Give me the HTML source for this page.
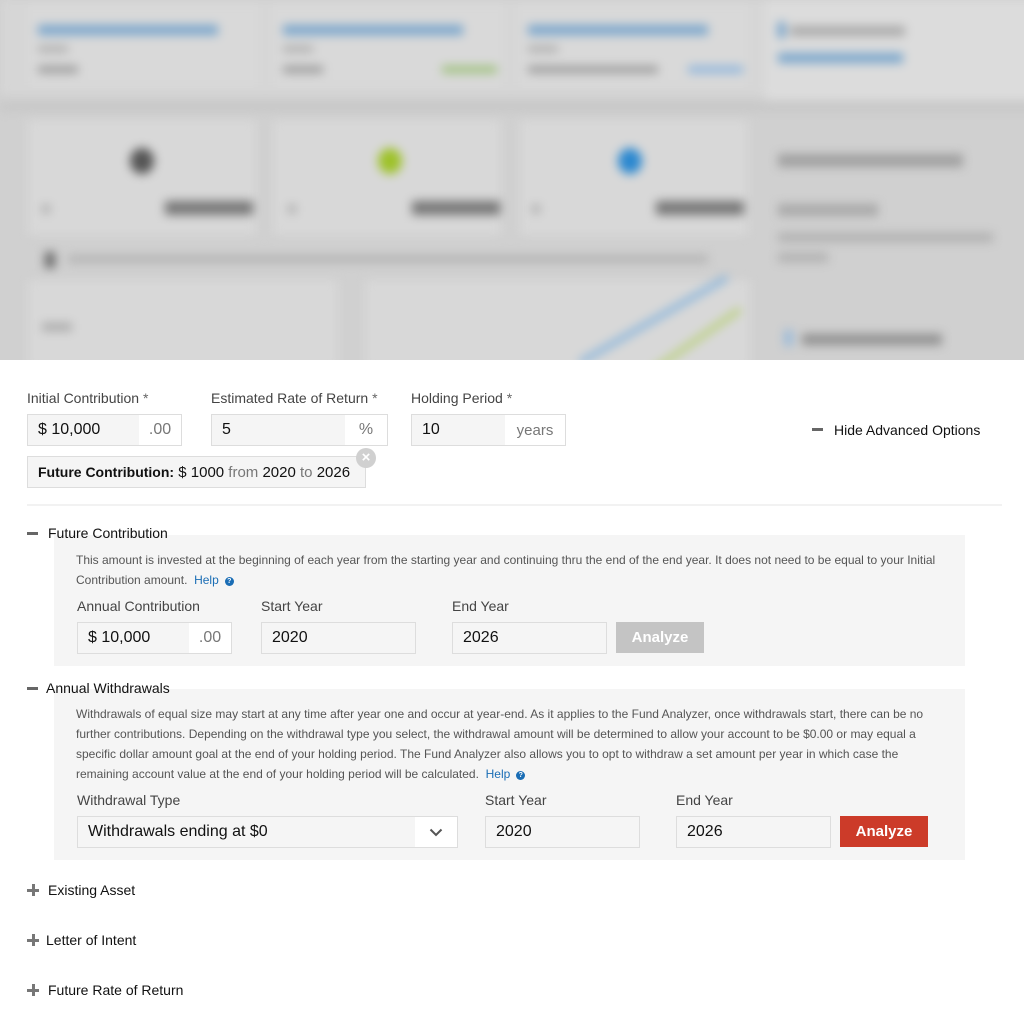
<!DOCTYPE html>
<html><head><style>
*{margin:0;padding:0;box-sizing:border-box}
body{width:1024px;height:1024px;overflow:hidden;background:#fff;font-family:"Liberation Sans",Arial,sans-serif;position:relative;color:#222}
.a{position:absolute}
#top{position:absolute;left:0;top:0;width:1024px;height:360px;overflow:hidden;background:#d0d0d0}
#blur{position:absolute;left:-10px;top:-10px;width:1044px;height:380px;filter:blur(5px)}
.lbl{font-size:14px;color:#444;position:absolute}
.inp{position:absolute;border:1px solid #ddd;background:#f5f5f5;font-size:16px;color:#111;padding-left:10px;display:flex;align-items:center}
.suf{position:absolute;right:0;top:0;bottom:0;background:#fff;color:#777;display:flex;align-items:center;justify-content:center}
.sec{position:absolute;font-size:14px;color:#111}
.minus{position:absolute;width:11px;height:3px;background:#666}
.plus{position:absolute;width:12px;height:12px}
.plus:before{content:"";position:absolute;left:0;top:5px;width:12px;height:3px;background:#777}
.plus:after{content:"";position:absolute;left:4.5px;top:0;width:3px;height:12px;background:#777}
.txt{position:absolute;font-size:12px;color:#555;line-height:20px}
.help{color:#1a6db5}
.q{display:inline-block;width:9px;height:9px;border-radius:50%;background:#1a6db5;color:#fff;font-size:7px;font-weight:bold;line-height:9px;text-align:center;vertical-align:1px;margin-left:6px}
</style></head><body>
<div id="top"><div id="blur">
 <div class="a" style="left:10px;top:10px;width:1044px;height:95px;background:#d6d6d6"></div>
 <div class="a" style="left:38px;top:15px;width:230px;height:80px;background:#d9d9d9"></div>
 <div class="a" style="left:283px;top:15px;width:230px;height:80px;background:#d9d9d9"></div>
 <div class="a" style="left:528px;top:15px;width:230px;height:80px;background:#d9d9d9"></div>
 <div class="a" style="left:775px;top:10px;width:270px;height:100px;background:#dcdcdc"></div>
 <div class="a" style="left:48px;top:35px;width:180px;height:10px;background:#7aa6cc"></div>
 <div class="a" style="left:293px;top:35px;width:180px;height:10px;background:#7aa6cc"></div>
 <div class="a" style="left:538px;top:35px;width:180px;height:10px;background:#7aa6cc"></div>
 <div class="a" style="left:48px;top:56px;width:30px;height:6px;background:#aaa"></div>
 <div class="a" style="left:48px;top:76px;width:40px;height:7px;background:#999"></div>
 <div class="a" style="left:293px;top:56px;width:30px;height:6px;background:#aaa"></div>
 <div class="a" style="left:293px;top:76px;width:40px;height:7px;background:#999"></div>
 <div class="a" style="left:538px;top:56px;width:30px;height:6px;background:#aaa"></div>
 <div class="a" style="left:538px;top:76px;width:130px;height:7px;background:#999"></div>
 <div class="a" style="left:452px;top:76px;width:55px;height:7px;background:#9cc07a"></div>
 <div class="a" style="left:698px;top:76px;width:55px;height:7px;background:#8cb4dc"></div>
 <div class="a" style="left:788px;top:32px;width:7px;height:16px;background:#6a9cc8"></div>
 <div class="a" style="left:800px;top:36px;width:115px;height:10px;background:#aaa"></div>
 <div class="a" style="left:788px;top:63px;width:125px;height:10px;background:#7aa6cc"></div>
 <div class="a" style="left:10px;top:113px;width:1044px;height:8px;background:#c6c6c6"></div>
 <div class="a" style="left:38px;top:130px;width:228px;height:115px;background:#d8d8d8"></div>
 <div class="a" style="left:283px;top:130px;width:228px;height:115px;background:#d8d8d8"></div>
 <div class="a" style="left:530px;top:130px;width:228px;height:115px;background:#d8d8d8"></div>
 <div class="a" style="left:140px;top:158px;width:24px;height:26px;border-radius:50%;background:#555"></div>
 <div class="a" style="left:388px;top:158px;width:24px;height:26px;border-radius:50%;background:#9ec22a"></div>
 <div class="a" style="left:628px;top:158px;width:24px;height:26px;border-radius:50%;background:#2b88d0"></div>
 <div class="a" style="left:175px;top:211px;width:88px;height:14px;background:#777"></div>
 <div class="a" style="left:422px;top:211px;width:88px;height:14px;background:#777"></div>
 <div class="a" style="left:666px;top:211px;width:88px;height:14px;background:#777"></div>
 <div class="a" style="left:52px;top:215px;width:8px;height:8px;background:#aaa"></div>
 <div class="a" style="left:298px;top:215px;width:8px;height:8px;background:#aaa"></div>
 <div class="a" style="left:542px;top:215px;width:8px;height:8px;background:#aaa"></div>
 <div class="a" style="left:788px;top:164px;width:185px;height:13px;background:#a0a0a0"></div>
 <div class="a" style="left:788px;top:214px;width:100px;height:12px;background:#a8a8a8"></div>
 <div class="a" style="left:788px;top:243px;width:215px;height:9px;background:#b0b0b0"></div>
 <div class="a" style="left:788px;top:263px;width:50px;height:9px;background:#b0b0b0"></div>
 <div class="a" style="left:55px;top:262px;width:10px;height:16px;background:#666"></div>
 <div class="a" style="left:78px;top:265px;width:640px;height:8px;background:#b4b4b4"></div>
 <div class="a" style="left:38px;top:290px;width:310px;height:90px;background:#d8d8d8"></div>
 <div class="a" style="left:375px;top:290px;width:385px;height:90px;background:#d8d8d8"></div>
 <div class="a" style="left:52px;top:333px;width:30px;height:8px;background:#aaa"></div>
 <div class="a" style="left:590px;top:370px;width:170px;height:5px;background:#7aaedc;transform:rotate(-30deg);transform-origin:left"></div>
 <div class="a" style="left:660px;top:380px;width:110px;height:5px;background:#b6d070;transform:rotate(-35deg);transform-origin:left"></div>
 <div class="a" style="left:795px;top:340px;width:7px;height:16px;background:#8cb4dc"></div>
 <div class="a" style="left:812px;top:344px;width:140px;height:11px;background:#909090"></div>
</div></div>

<div class="lbl" style="left:27px;top:390px">Initial Contribution <span style="color:#666">*</span></div>
<div class="lbl" style="left:211px;top:390px">Estimated Rate of Return <span style="color:#666">*</span></div>
<div class="lbl" style="left:411px;top:390px">Holding Period <span style="color:#666">*</span></div>
<div class="inp" style="left:27px;top:414px;width:155px;height:32px">$ 10,000<div class="suf" style="width:42px;font-size:16px">.00</div></div>
<div class="inp" style="left:211px;top:414px;width:177px;height:32px">5<div class="suf" style="width:42px;font-size:16px">%</div></div>
<div class="inp" style="left:411px;top:414px;width:155px;height:32px">10<div class="suf" style="width:60px;font-size:15px">years</div></div>
<div class="minus" style="left:812px;top:428px"></div>
<div class="sec" style="left:834px;top:422px">Hide Advanced Options</div>
<div class="inp" style="left:27px;top:456px;width:339px;height:32px;font-size:15px;padding-left:10px"><b style="font-size:14px">Future Contribution:</b>&nbsp;$ 1000 <span style="color:#777">&nbsp;from&nbsp;</span>2020<span style="color:#777">&nbsp;to&nbsp;</span>2026</div>
<div class="a" style="left:356px;top:448px;width:20px;height:20px;border-radius:50%;background:#d0d0d0;color:#fff;font-size:15px;font-weight:bold;text-align:center;line-height:20px">×</div>
<div class="a" style="left:27px;top:504px;width:975px;height:2px;background:#f2f2f2"></div>

<div class="minus" style="left:27px;top:532px"></div>
<div class="a" style="left:54px;top:535px;width:911px;height:131px;background:#f5f5f5"></div>
<div class="sec" style="left:48px;top:525px">Future Contribution</div>
<div class="txt" style="left:76px;top:550px;width:880px">This amount is invested at the beginning of each year from the starting year and continuing thru the end of the end year. It does not need to be equal to your Initial Contribution amount. <span class="help">&nbsp;Help</span><span class="q">?</span></div>
<div class="lbl" style="left:77px;top:598px">Annual Contribution</div>
<div class="lbl" style="left:261px;top:598px">Start Year</div>
<div class="lbl" style="left:452px;top:598px">End Year</div>
<div class="inp" style="left:77px;top:622px;width:155px;height:32px">$ 10,000<div class="suf" style="width:42px;font-size:16px">.00</div></div>
<div class="inp" style="left:261px;top:622px;width:155px;height:32px">2020</div>
<div class="inp" style="left:452px;top:622px;width:155px;height:32px">2026</div>
<div class="a" style="left:616px;top:622px;width:88px;height:31px;background:#c4c4c4;color:#fff;font-weight:bold;font-size:15px;text-align:center;line-height:31px">Analyze</div>

<div class="minus" style="left:27px;top:687px"></div>
<div class="a" style="left:54px;top:689px;width:911px;height:171px;background:#f5f5f5"></div>
<div class="sec" style="left:46px;top:680px">Annual Withdrawals</div>
<div class="txt" style="left:76px;top:704px;width:862px">Withdrawals of equal size may start at any time after year one and occur at year-end. As it applies to the Fund Analyzer, once withdrawals start, there can be no further contributions. Depending on the withdrawal type you select, the withdrawal amount will be determined to allow your account to be $0.00 or may equal a specific dollar amount goal at the end of your holding period. The Fund Analyzer also allows you to opt to withdraw a set amount per year in which case the remaining account value at the end of your holding period will be calculated. <span class="help">&nbsp;Help</span><span class="q">?</span></div>
<div class="lbl" style="left:77px;top:792px">Withdrawal Type</div>
<div class="lbl" style="left:485px;top:792px">Start Year</div>
<div class="lbl" style="left:676px;top:792px">End Year</div>
<div class="inp" style="left:77px;top:816px;width:381px;height:32px">Withdrawals ending at $0<div class="suf" style="width:42px"><svg width="14" height="9" viewBox="0 0 14 9"><path d="M1.5 1.5L7 7L12.5 1.5" stroke="#555" stroke-width="2" fill="none"/></svg></div></div>
<div class="inp" style="left:485px;top:816px;width:155px;height:32px">2020</div>
<div class="inp" style="left:676px;top:816px;width:155px;height:32px">2026</div>
<div class="a" style="left:840px;top:816px;width:88px;height:31px;background:#cc3b29;color:#fff;font-weight:bold;font-size:15px;text-align:center;line-height:31px">Analyze</div>

<div class="plus" style="left:27px;top:884px"></div>
<div class="sec" style="left:48px;top:882px">Existing Asset</div>
<div class="plus" style="left:27px;top:934px"></div>
<div class="sec" style="left:46px;top:932px">Letter of Intent</div>
<div class="plus" style="left:27px;top:984px"></div>
<div class="sec" style="left:48px;top:982px">Future Rate of Return</div>
</body></html>
